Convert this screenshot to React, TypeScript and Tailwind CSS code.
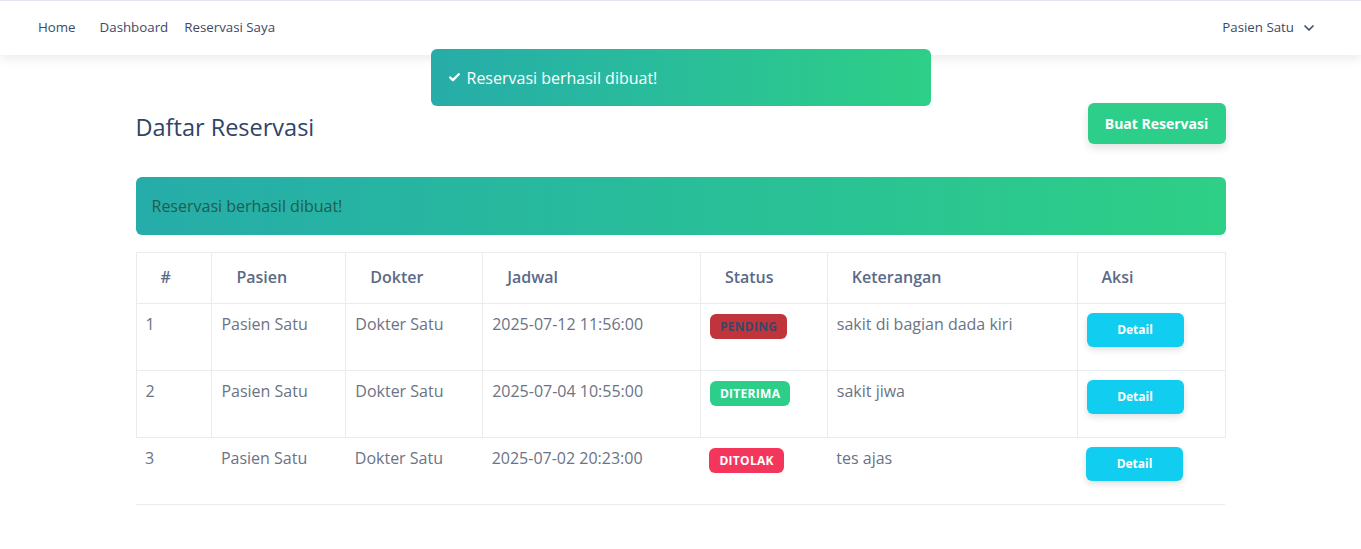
import { Check, ChevronDown } from 'lucide-react';

type Status = 'pending' | 'diterima' | 'ditolak';

interface Reservasi {
  id: number;
  pasien: string;
  dokter: string;
  jadwal: string;
  status: Status;
  keterangan: string;
}

const reservasi: Reservasi[] = [
  { id: 1, pasien: 'Pasien Satu', dokter: 'Dokter Satu', jadwal: '2025-07-12 11:56:00', status: 'pending', keterangan: 'sakit di bagian dada kiri' },
  { id: 2, pasien: 'Pasien Satu', dokter: 'Dokter Satu', jadwal: '2025-07-04 10:55:00', status: 'diterima', keterangan: 'sakit jiwa' },
  { id: 3, pasien: 'Pasien Satu', dokter: 'Dokter Satu', jadwal: '2025-07-02 20:23:00', status: 'ditolak', keterangan: 'tes ajas' },
];

const badgeClass: Record<Status, string> = {
  pending: 'bg-[#c0343b] text-[#3a4766]',
  diterima: 'bg-[#2dce89] text-white',
  ditolak: 'bg-[#f5365c] text-white',
};

function StatusBadge({ status }: { status: Status }) {
  return (
    <span
      className={`flex w-fit items-center h-[25px] px-[10px] rounded-[6px] text-[12px] font-bold uppercase tracking-[0.3px] ${badgeClass[status]}`}
    >
      {status}
    </span>
  );
}

export default function App() {
  return (
    <div className="min-h-[549px] bg-white font-['Open_Sans',sans-serif] relative">
      <nav className="h-[55px] border-t border-[#e3e6ee] bg-white shadow-[0_4px_10px_rgba(0,0,0,0.08)] flex items-center justify-between pl-[38px] pr-[44px] text-[13.3px] text-[#3d4a66]">
        <div className="flex items-center pb-[1px]">
          <a className="mr-[24px]">Home</a>
          <a className="mr-[16px]">Dashboard</a>
          <a>Reservasi Saya</a>
        </div>
        <div className="flex items-center gap-[7px] pb-[1px]">
          <span>Pasien Satu</span>
          <ChevronDown size={16} strokeWidth={2.5} />
        </div>
      </nav>

      <div className="absolute top-[49px] left-1/2 -translate-x-1/2 w-[500px] h-[57px] rounded-[6px] bg-gradient-to-r from-[#27aca9] to-[#2ecf86] flex items-center pl-[17px] text-white text-[16px] font-medium z-10">
        <Check size={13} strokeWidth={4.5} className="mr-[6px]" />
        <span>Reservasi berhasil dibuat!</span>
      </div>

      <main className="w-[1090px] mx-auto pt-[48px]">
        <div className="flex items-start justify-between">
          <h1 className="mt-[8px] text-[23.5px] leading-[32px] font-medium text-[#2f4466]">Daftar Reservasi</h1>
          <button className="h-[41px] w-[138px] rounded-[6px] bg-[#2dce89] text-white text-[14px] font-bold shadow-[0_4px_8px_rgba(0,0,0,0.12)]">
            Buat Reservasi
          </button>
        </div>

        <div className="mt-[33px] h-[58px] rounded-[6px] bg-gradient-to-r from-[#26aca9] to-[#2ecf86] flex items-center px-[16px] text-[16px] text-[#1e5d50]">
          Reservasi berhasil dibuat!
        </div>

        <table className="mt-[17px] w-full border-collapse text-[16px]">
          <colgroup>
            <col className="w-[76px]" />
            <col className="w-[134px]" />
            <col className="w-[137px]" />
            <col className="w-[218px]" />
            <col className="w-[127px]" />
            <col className="w-[250px]" />
            <col className="w-[148px]" />
          </colgroup>
          <thead>
            <tr className="h-[51px] text-[#5b6a87]">
              {['#', 'Pasien', 'Dokter', 'Jadwal', 'Status', 'Keterangan', 'Aksi'].map((h) => (
                <th key={h} className="border border-[#e9ecef] text-left font-semibold pl-[24px] pb-[2px] align-middle">
                  {h}
                </th>
              ))}
            </tr>
          </thead>
          <tbody className="text-[#6b7385]">
            {reservasi.map((r, i) => {
              const last = i === reservasi.length - 1;
              const td = last
                ? 'border-b border-[#e9ecef] align-top px-[9px] pt-[8px]'
                : 'border border-[#e9ecef] align-top px-[9px] pt-[8px]';
              return (
                <tr key={r.id} className="h-[67px]">
                  <td className={td}>{r.id}</td>
                  <td className={td}>{r.pasien}</td>
                  <td className={td}>{r.dokter}</td>
                  <td className={td}>{r.jadwal}</td>
                  <td className={`${td} !pt-[10px]`}>
                    <StatusBadge status={r.status} />
                  </td>
                  <td className={td}>{r.keterangan}</td>
                  <td className={`${td} !pt-[9px]`}>
                    <button className="block h-[34px] w-[97px] rounded-[6px] bg-[#11cdef] text-white text-[12px] font-bold shadow-[0_3px_6px_rgba(0,0,0,0.12)]">
                      Detail
                    </button>
                  </td>
                </tr>
              );
            })}
          </tbody>
        </table>
      </main>
    </div>
  );
}
